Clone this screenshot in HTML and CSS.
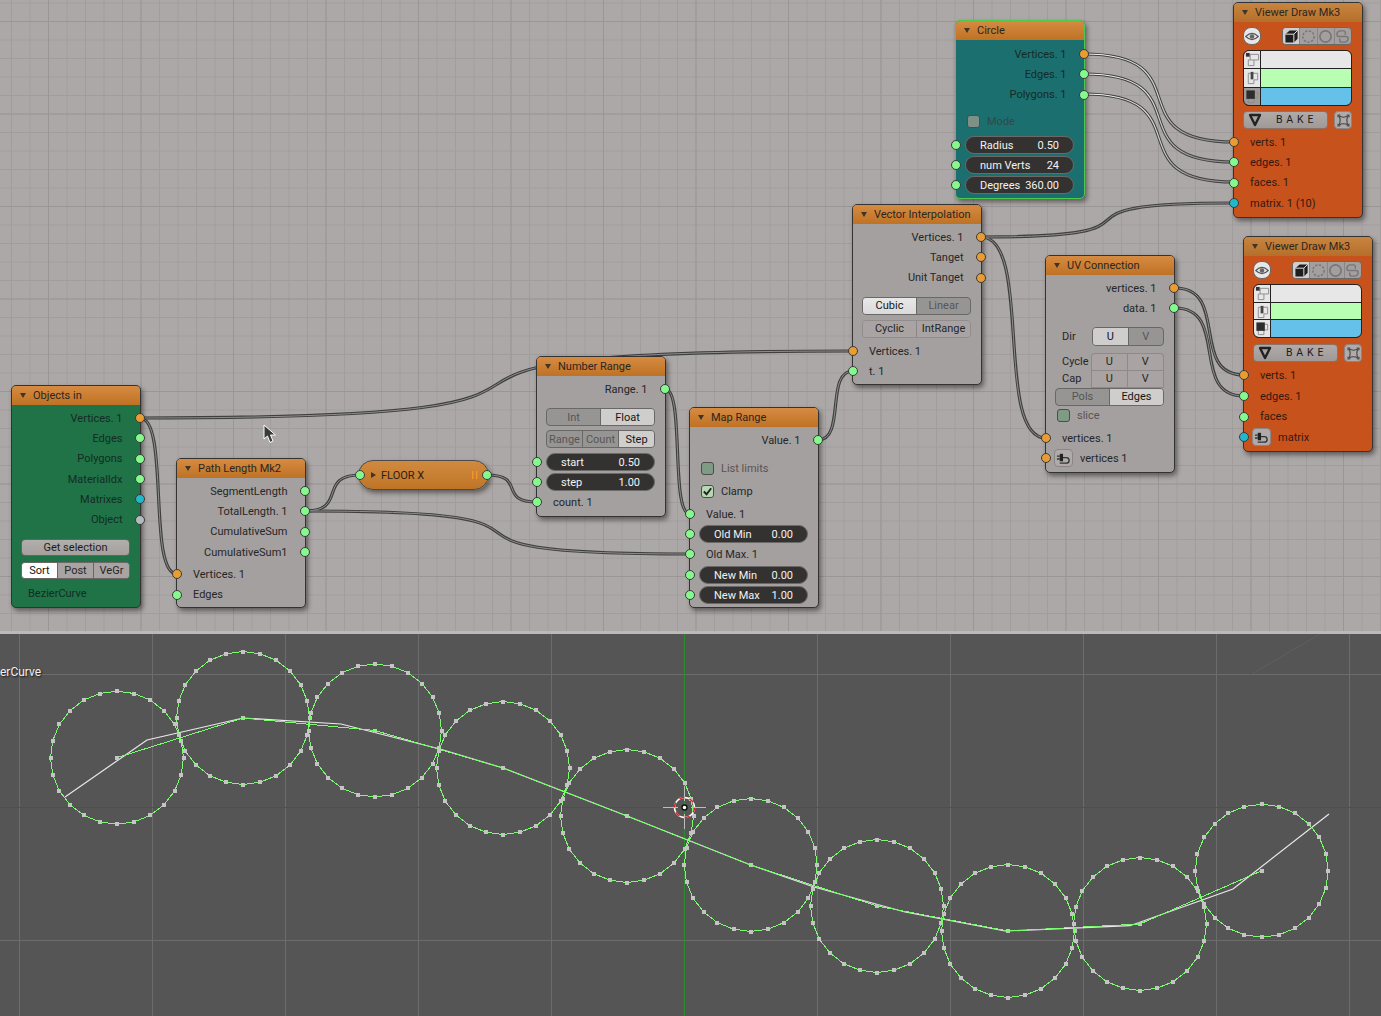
FILE: index.html
```html
<!DOCTYPE html>
<html lang="en">
<head>
<meta charset="utf-8">
<title>Sverchok node editor</title>
<link rel="stylesheet" href="styles.css">
</head>
<body>
<svg class="defs" aria-hidden="true">
  <defs>
    <linearGradient id="sel-grad" gradientUnits="userSpaceOnUse" x1="1084" y1="0" x2="1234" y2="0">
      <stop offset="0" stop-color="#fafafa"/><stop offset=".45" stop-color="#d8d8d8"/><stop offset=".75" stop-color="#8e8e8e"/><stop offset="1" stop-color="#8e8e8e"/>
    </linearGradient>
    <symbol id="i-eye" viewBox="0 0 18 14"><path d="M1 7Q9-1 17 7Q9 15 1 7Z" fill="none" stroke="#555" stroke-width="1.4"/><circle cx="9" cy="7" r="3" fill="#666"/></symbol>
    <symbol id="i-cube" viewBox="0 0 16 16"><path d="M1.500 5.500 6 1.500H14.500V10.500L10.500 14.500H1.500Z" fill="#1e1e1e"/><path d="M1.500 5.500H10.500V14.500M10.500 5.500 14.500 1.500" fill="none" stroke="#eee" stroke-width="1"/></symbol>
    <symbol id="i-dots" viewBox="0 0 16 16"><circle cx="8" cy="8" r="6" fill="none" stroke="#777" stroke-width="1.6" stroke-dasharray="2.4 1.6"/></symbol>
    <symbol id="i-ring" viewBox="0 0 16 16"><circle cx="8" cy="8" r="6" fill="none" stroke="#777" stroke-width="1.8"/></symbol>
    <symbol id="i-py" viewBox="0 0 16 16"><path d="M8 8H4Q2 8 2 5.500T5 2H9Q11 2 11 4V6M8 8H12Q14 8 14 10.500T11 14H7Q5 14 5 12V10" fill="none" stroke="#777" stroke-width="1.5"/></symbol>
    <symbol id="i-t1" viewBox="0 0 16 16"><path d="M5.500 2.500H14.500V8.500H9.500V14.500H3.500V8.500H5.500ZM5.500 8.500H9.500" fill="none" stroke="#8b8b8b"/><rect x="1" y="1" width="4" height="4" fill="#333"/></symbol>
    <symbol id="i-t2" viewBox="0 0 16 16"><path d="M3.500 3.500H13.500V10.500H9.500V14.500H3.500Z" fill="none" stroke="#8b8b8b"/><rect x="6" y="2" width="3" height="8" fill="#444"/></symbol>
    <symbol id="i-t3" viewBox="0 0 16 16"><path d="M3.500 9.500V14.500H9.500V9.500M10.500 3.500H13.500V9.500H10.500" fill="none" stroke="#8b8b8b"/><rect x="1.500" y="1.500" width="9" height="9" fill="#2d2d2d"/></symbol>
    <symbol id="i-tri" viewBox="0 0 14 14"><path d="M2 2H12L7 12Z" fill="none" stroke="#222" stroke-width="2.400" stroke-linejoin="round"/></symbol>
    <symbol id="i-conn" viewBox="0 0 16 16"><path d="M3 3Q8 6 13 3Q10 8 13 13Q8 10 3 13Q6 8 3 3Z" fill="none" stroke="#444" stroke-width="1.200"/><path d="M1.500 1.500h3v3h-3zM11.500 1.500h3v3h-3zM1.500 11.500h3v3h-3zM11.500 11.500h3v3h-3z" fill="#555"/></symbol>
    <symbol id="i-plug" viewBox="0 0 16 16"><path d="M1 5.500H4M1 8.500H4M7 7H11Q14 7 14 10T11 13H4" fill="none" stroke="#333" stroke-width="1.400"/><rect x="4" y="3" width="3.500" height="8" fill="#222"/></symbol>
  </defs>
</svg>

<main class="screen">
  <section class="editor">
    <svg class="wires" viewBox="0 0 1381 631" aria-hidden="true">
      <defs>
        <g id="links">
          <path d="M140 418C169.600 418 147.400 574 177 574"/>
          <path d="M140 418C746 418 247 351 853 351"/>
          <path d="M305 511C348 511 317 475 360 475"/>
          <path d="M305 511C632 511 363 554 690 554"/>
          <path d="M487 475C527 475 497 502 537 502"/>
          <path d="M665 389C685 389 670 514 690 514"/>
          <path d="M818 440C846 440 825 371 853 371"/>
          <path d="M981 237C1033 237 994 438 1046 438"/>
          <path d="M981 237C1195 237 1020 203 1234 203"/>
          <path d="M1175 288C1230 288 1189 375 1244 375"/>
          <path d="M1175 308C1230 308 1189 396 1244 396"/>
        </g>
        <g id="links-sel">
          <path d="M1084 54C1204 54 1114 142 1234 142"/>
          <path d="M1084 74C1204 74 1114 162 1234 162"/>
          <path d="M1084 94C1204 94 1114 182 1234 182"/>
        </g>
      </defs>
      <use href="#links" class="wire-out"/>
      <use href="#links" class="wire-in"/>
      <use href="#links-sel" class="wire-out"/>
      <use href="#links-sel" class="wire-sel"/>
    </svg>

    <article class="node n-objects green">
      <header class="hd"><i class="tri"></i>Objects in</header>
      <div class="row out mt3">Vertices. 1<i class="sock r orange"></i></div>
      <div class="row out">Edges<i class="sock r lime"></i></div>
      <div class="row out">Polygons<i class="sock r lime"></i></div>
      <div class="row out">MaterialIdx<i class="sock r lime"></i></div>
      <div class="row out">Matrixes<i class="sock r cyan"></i></div>
      <div class="row out">Object<i class="sock r grey"></i></div>
      <div class="ctl btn h17 mt9">Get selection</div>
      <div class="ctl seg h17 mt6"><span class="on white">Sort</span><span class="act">Post</span><span class="act">VeGr</span></div>
      <div class="row mt5">BezierCurve</div>
    </article>

    <article class="node n-path">
      <header class="hd"><i class="tri"></i>Path Length Mk2</header>
      <div class="row out mt3">SegmentLength<i class="sock r lime"></i></div>
      <div class="row out">TotalLength. 1<i class="sock r lime"></i></div>
      <div class="row out">CumulativeSum<i class="sock r lime"></i></div>
      <div class="row out">CumulativeSum1<i class="sock r lime"></i></div>
      <div class="row mt2"><i class="sock l orange"></i>Vertices. 1</div>
      <div class="row"><i class="sock l lime"></i>Edges</div>
    </article>

    <article class="floor">
      <i class="sock l lime"></i><i class="tri side"></i>FLOOR X<b class="pause">II</b><i class="sock r lime"></i>
    </article>

    <article class="node n-range">
      <header class="hd"><i class="tri"></i>Number Range</header>
      <div class="row out mt3">Range. 1<i class="sock r lime"></i></div>
      <div class="ctl seg mt9"><span>Int</span><span class="on">Float</span></div>
      <div class="ctl seg mt4"><span>Range</span><span>Count</span><span class="on">Step</span></div>
      <div class="ctl pill mt5"><i class="sock l lime"></i><span>start</span><span>0.50</span></div>
      <div class="ctl pill mt2"><i class="sock l lime"></i><span>step</span><span>1.00</span></div>
      <div class="row mt1"><i class="sock l lime"></i>count. 1</div>
    </article>

    <article class="node n-map">
      <header class="hd"><i class="tri"></i>Map Range</header>
      <div class="row out mt3">Value. 1<i class="sock r lime"></i></div>
      <div class="row check mt8"><i class="box"></i><span class="dim">List limits</span></div>
      <div class="row check mt3"><i class="box on"><svg viewBox="0 0 12 12"><path d="M2 6 5 9 10 2.500" fill="none" stroke="#222" stroke-width="2"/></svg></i>Clamp</div>
      <div class="row mt2"><i class="sock l lime"></i>Value. 1</div>
      <div class="ctl pill mt1"><i class="sock l lime"></i><span>Old Min</span><span>0.00</span></div>
      <div class="row mt1"><i class="sock l lime"></i>Old Max. 1</div>
      <div class="ctl pill mt2"><i class="sock l lime"></i><span>New Min</span><span>0.00</span></div>
      <div class="ctl pill mt2"><i class="sock l lime"></i><span>New Max</span><span>1.00</span></div>
    </article>

    <article class="node n-vector">
      <header class="hd"><i class="tri"></i>Vector Interpolation</header>
      <div class="row out mt3">Vertices. 1<i class="sock r orange"></i></div>
      <div class="row out">Tanget<i class="sock r orange"></i></div>
      <div class="row out">Unit Tanget<i class="sock r orange"></i></div>
      <div class="ctl seg mt9"><span class="on bright">Cubic</span><span>Linear</span></div>
      <div class="ctl seg plain mt5"><span class="act">Cyclic</span><span class="act">IntRange</span></div>
      <div class="row mt3"><i class="sock l orange"></i>Vertices. 1</div>
      <div class="row"><i class="sock l lime"></i>t. 1</div>
    </article>

    <article class="node n-uv">
      <header class="hd"><i class="tri"></i>UV Connection</header>
      <div class="row out mt3">vertices. 1<i class="sock r orange"></i></div>
      <div class="row out">data. 1<i class="sock r lime"></i></div>
      <div class="lab-row mt8"><span class="lab">Dir</span><div class="seg grow"><span class="on">U</span><span>V</span></div></div>
      <div class="lab-grid mt7">
        <div class="labs"><span class="lab">Cycle</span><span class="lab">Cap</span></div>
        <div class="tbl"><span>U</span><span>V</span><span>U</span><span>V</span></div>
      </div>
      <div class="ctl seg"><span>Pols</span><span class="on">Edges</span></div>
      <div class="row check"><i class="box"></i><span class="dim">slice</span></div>
      <div class="row mt2"><i class="sock l orange"></i>vertices. 1</div>
      <div class="row plugrow"><i class="sock l orange"></i><i class="plug"><svg><use href="#i-plug"/></svg></i>vertices 1</div>
    </article>

    <article class="node n-circle teal">
      <header class="hd"><i class="tri"></i>Circle</header>
      <div class="row out mt4">Vertices. 1<i class="sock r orange"></i></div>
      <div class="row out">Edges. 1<i class="sock r lime"></i></div>
      <div class="row out">Polygons. 1<i class="sock r lime"></i></div>
      <div class="row check mt6"><i class="box"></i><span class="dim">Mode</span></div>
      <div class="ctl pill mt5"><i class="sock l lime"></i><span>Radius</span><span>0.50</span></div>
      <div class="ctl pill mt2"><i class="sock l lime"></i><span>num Verts</span><span>24</span></div>
      <div class="ctl pill mt2"><i class="sock l lime"></i><span>Degrees</span><span>360.00</span></div>
    </article>

    <article class="node viewer v-one">
      <header class="hd"><i class="tri"></i>Viewer Draw Mk3</header>
      <div class="tools mt5">
        <i class="eye"><svg><use href="#i-eye"/></svg></i>
        <div class="modes"><i class="on"><svg><use href="#i-cube"/></svg></i><i><svg><use href="#i-dots"/></svg></i><i><svg><use href="#i-ring"/></svg></i><i><svg><use href="#i-py"/></svg></i></div>
      </div>
      <div class="swatches mt5">
        <div class="sw"><i><svg><use href="#i-t1"/></svg></i><b class="c-v"></b></div>
        <div class="sw"><i><svg><use href="#i-t2"/></svg></i><b class="c-e"></b></div>
        <div class="sw"><i class="darkcell"><svg><use href="#i-t3"/></svg></i><b class="c-f"></b></div>
      </div>
      <div class="bakebar mt5">
        <div class="bake"><svg><use href="#i-tri"/></svg><span>BAKE</span></div>
        <i class="plug conn"><svg><use href="#i-conn"/></svg></i>
      </div>
      <div class="row mt3"><i class="sock l orange"></i>verts. 1</div>
      <div class="row"><i class="sock l lime"></i>edges. 1</div>
      <div class="row"><i class="sock l lime"></i>faces. 1</div>
      <div class="row"><i class="sock l cyan"></i>matrix. 1 (10)</div>
    </article>

    <article class="node viewer v-two">
      <header class="hd"><i class="tri"></i>Viewer Draw Mk3</header>
      <div class="tools mt5">
        <i class="eye"><svg><use href="#i-eye"/></svg></i>
        <div class="modes"><i class="on"><svg><use href="#i-cube"/></svg></i><i><svg><use href="#i-dots"/></svg></i><i><svg><use href="#i-ring"/></svg></i><i><svg><use href="#i-py"/></svg></i></div>
      </div>
      <div class="swatches mt5">
        <div class="sw"><i><svg><use href="#i-t1"/></svg></i><b class="c-v"></b></div>
        <div class="sw"><i><svg><use href="#i-t2"/></svg></i><b class="c-e"></b></div>
        <div class="sw"><i><svg><use href="#i-t3"/></svg></i><b class="c-f"></b></div>
      </div>
      <div class="bakebar mt6">
        <div class="bake"><svg><use href="#i-tri"/></svg><span>BAKE</span></div>
        <i class="plug conn"><svg><use href="#i-conn"/></svg></i>
      </div>
      <div class="row mt3"><i class="sock l orange"></i>verts. 1</div>
      <div class="row mt1"><i class="sock l lime"></i>edges. 1</div>
      <div class="row"><i class="sock l lime"></i>faces</div>
      <div class="row plugrow"><i class="sock l cyan"></i><i class="plug"><svg><use href="#i-plug"/></svg></i>matrix</div>
    </article>

    <svg class="pointer" viewBox="0 0 14 20" aria-hidden="true"><path d="M1 1V15L4.500 12 7 18.500 10 17 7.500 11H12.500Z" fill="#3a3a3a" stroke="#fff" stroke-width="1"/></svg>
  </section>

  <section class="viewport">
    <svg class="scene" viewBox="0 634 1381 382" aria-hidden="true">
      <defs>
        <g id="ring">
          <polygon class="edge" points="66.5,0 64.2,17.2 57.6,33.3 47,47 33.3,57.6 17.2,64.2 0,66.5 -17.2,64.2 -33.3,57.6 -47,47 -57.6,33.3 -64.2,17.2 -66.5,0 -64.2,-17.2 -57.6,-33.3 -47,-47 -33.3,-57.6 -17.2,-64.2 0,-66.5 17.2,-64.2 33.3,-57.6 47,-47 57.6,-33.3 64.2,-17.2"/>
          <path class="vert" d="M64.5-2h4v4h-4zM62.2 15.200h4v4h-4zM55.600 31.300h4v4h-4zM45 45h4v4h-4zM31.300 55.600h4v4h-4zM15.200 62.200h4v4h-4zM-2 64.500h4v4h-4zM-19.200 62.200h4v4h-4zM-35.300 55.600h4v4h-4zM-49 45h4v4h-4zM-59.600 31.300h4v4h-4zM-66.200 15.200h4v4h-4zM-68.500-2h4v4h-4zM-66.200-19.200h4v4h-4zM-59.600-35.300h4v4h-4zM-49-49h4v4h-4zM-35.300-59.600h4v4h-4zM-19.200-66.200h4v4h-4zM-2-68.500h4v4h-4zM15.200-66.200h4v4h-4zM31.300-59.600h4v4h-4zM45-49h4v4h-4zM55.600-35.300h4v4h-4zM62.200-19.200h4v4h-4zM-2-2h4v4h-4z"/>
        </g>
      </defs>
      <path class="grid" d="M19.500 634V1016M152.500 634V1016M285.500 634V1016M418.500 634V1016M551.500 634V1016M817.500 634V1016M950.500 634V1016M1083.500 634V1016M1216.500 634V1016M1349.500 634V1016M0 674.500H1381M0 940.500H1381"/>
      <path class="faint" d="M1250 675 1320 634"/>
      <path class="axis-x" d="M0 807.500H1381"/>
      <path class="axis-y" d="M684.500 634V1016"/>
      <polyline class="spline" points="65,797 147,740 243,718 341,724 440,749 503,768 627,816 750.700,865 814,887 905,912 1005,931 1130,925.700 1233,889 1329,814"/>
      <use href="#ring" x="117" y="757.700"/>
      <use href="#ring" x="243" y="718"/>
      <use href="#ring" x="375" y="730.500"/>
      <use href="#ring" x="503" y="768"/>
      <use href="#ring" x="627" y="816"/>
      <use href="#ring" x="750.700" y="865"/>
      <use href="#ring" x="877" y="906"/>
      <use href="#ring" x="1008" y="931"/>
      <use href="#ring" x="1140" y="924"/>
      <use href="#ring" x="1261.700" y="870.700"/>
      <polyline class="path" points="117,757.700 243,718 375,730.500 503,768 627,816 750.700,865 877,906 1008,931 1140,924 1261.700,870.700"/>
      <path class="cross" d="M663 807.500H678M691 807.500H706M684.500 786V801M684.500 814V829"/>
      <circle class="cur-w" cx="684.500" cy="807.500" r="10"/>
      <circle class="cur-r" cx="684.500" cy="807.500" r="10"/>
      <circle class="cur-c" cx="684.500" cy="807.500" r="2.500"/>
    </svg>
    <span class="obj-name">erCurve</span>
  </section>
</main>
</body>
</html>
```

FILE: styles.css
```css
* { box-sizing: border-box; }
html, body { margin: 0; height: 100%; }
body {
  overflow: hidden;
  font: 11px/1 Roboto, "Noto Sans", sans-serif;
  color: #262626;
  background: #555;
}
i, b { font-style: normal; font-weight: normal; display: block; }
svg { display: block; }
.defs { position: absolute; width: 0; height: 0; }

.screen { width: 1381px; height: 1016px; display: flex; flex-direction: column; }

/* node editor */
.editor {
  position: relative;
  height: 631px;
  flex: none;
  overflow: hidden;
  background-color: #aca8a7;
  background-image:
    linear-gradient(to right, #9a9695 1px, transparent 1px),
    linear-gradient(to bottom, #9a9695 1px, transparent 1px),
    linear-gradient(to right, #a19d9c 1px, transparent 1px),
    linear-gradient(to bottom, #a19d9c 1px, transparent 1px);
  background-size: 92.5px 92.5px, 92.5px 92.5px, 18.5px 18.5px, 18.5px 18.5px;
  background-position: 48px 0, 0 21px, 11px 0, 0 2.500px;
}
.wires { position: absolute; left: 0; top: 0; width: 1381px; height: 631px; fill: none; }
.wire-out { stroke: #3f3f3f; stroke-width: 3.200; fill: none; }
.wire-in { stroke: #8e8e8e; stroke-width: 1; fill: none; }
.wire-sel { stroke: url(#sel-grad); stroke-width: 1.200; fill: none; }

.pointer { position: absolute; left: 263px; top: 424px; width: 14px; height: 20px; }

.node {
  position: absolute;
  width: 130px;
  border: 1px solid #333;
  border-radius: 5px;
  background: #a3a09f;
  box-shadow: 2px 3px 5px rgba(0, 0, 0, .45);
}
.hd {
  height: 19px;
  display: flex;
  align-items: center;
  padding-left: 8px;
  border-radius: 4px 4px 0 0;
  background: linear-gradient(#d68b42, #bf7224);
  color: #2b2620;
}
.tri {
  width: 0; height: 0;
  margin-right: 7px;
  border-style: solid;
  border-width: 5px 3px 0;
  border-color: #3f3426 transparent transparent;
}
.tri.side { border-width: 3px 0 3px 5px; border-color: transparent transparent transparent #3f3426; margin-right: 5px; }

.n-objects { left: 11px; top: 385px; height: 223px; }
.n-path { left: 176px; top: 458px; height: 150px; }
.n-range { left: 536px; top: 356px; height: 161px; }
.n-map { left: 689px; top: 407px; height: 201px; }
.n-vector { left: 852px; top: 204px; height: 181px; }
.n-uv { left: 1045px; top: 255px; height: 218px; }
.n-circle { left: 955px; top: 20px; height: 179px; }
.v-one { left: 1233px; top: 2px; height: 216px; }
.v-two { left: 1243px; top: 236px; height: 216px; }

.green { background: #1f7347; }
.teal { background: #1c6f6f; border-color: #4cc94c; }
.viewer { background: #c8521c; }
.viewer .hd { background: linear-gradient(#c8853f, #b56f2b); }

.row {
  position: relative;
  display: flex;
  align-items: center;
  height: 20.300px;
  padding: 0 17.500px 0 16px;
  white-space: nowrap;
}
.row.out { justify-content: flex-end; }
.green .row, .teal .row { color: #152b24; }
.viewer .row { padding-left: 16px; color: #33190f; }

.sock {
  position: absolute;
  top: 50%;
  width: 10px; height: 10px;
  margin-top: -5px;
  border: 1px solid #3a3a3a;
  border-radius: 50%;
  z-index: 2;
}
.sock.l { left: -5px; }
.sock.r { right: -5px; }
.orange { background: #e89c32; }
.lime { background: #85f98e; }
.cyan { background: #22b7c9; }
.grey { background: #b3bcbc; }

.mt1 { margin-top: 1px; }
.mt2 { margin-top: 2px; }
.mt3 { margin-top: 3px; }
.mt4 { margin-top: 4px; }
.mt5 { margin-top: 5px; }
.mt6 { margin-top: 6px; }
.mt7 { margin-top: 7px; }
.mt8 { margin-top: 8px; }
.mt9 { margin-top: 9px; }

.ctl { margin-left: 9px; margin-right: 10px; }

.btn {
  display: flex;
  align-items: center;
  justify-content: center;
  border: 1px solid #66625f;
  border-radius: 4px;
  background: linear-gradient(#b2aeac, #a5a09e);
  color: #1c1c1c;
}
.h17 { height: 17px; }

.seg {
  display: flex;
  height: 18px;
  border: 1px solid #6a6867;
  border-radius: 4px;
  overflow: hidden;
  background: #979594;
}
.seg span {
  flex: 1 1 0;
  display: flex;
  align-items: center;
  justify-content: center;
  color: #565655;
  white-space: nowrap;
}
.seg span + span { border-left: 1px solid #6a6867; }
.seg .on { background: #cfcecd; color: #161616; }
.seg .bright { background: linear-gradient(#e8e8e8, #dadada); }
.seg .white { background: #fff; }
.seg .act { background: #a9a4a3; color: #262626; }
.seg.plain { border-color: #918d8c; }
.seg.plain span + span { border-color: #8b8786; }
.seg.h17 { height: 17px; }

.pill {
  position: relative;
  display: flex;
  align-items: center;
  justify-content: space-between;
  height: 18px;
  padding: 0 14px;
  border: 1px solid #6b6968;
  border-radius: 9px;
  background: #343231;
  color: #f2f2f2;
}
.pill .sock { left: -15px; }

.check { gap: 7px; padding-left: 11px; }
.box {
  width: 13px; height: 13px;
  border: 1px solid #4c4c4c;
  border-radius: 3px;
  background: #7f9a85;
}
.box.on { background: #b7d9b2; }
.box svg { width: 11px; height: 11px; }
.teal .box { background: #7d9187; }
.dim { color: #5d5351; }
.teal .dim { color: #324a49; }

.lab-row, .lab-grid { display: flex; margin-left: 9px; margin-right: 10px; }
.lab-row { align-items: center; height: 19px; }
.lab { color: #262626; padding-left: 7px; }
.lab-row .lab { width: 37px; }
.grow { flex: 1; height: 19px; }
.labs { width: 36px; display: flex; flex-direction: column; justify-content: space-around; }
.tbl {
  flex: 1;
  display: grid;
  grid-template-columns: 1fr 1fr;
  height: 35px;
  border: 1px solid #8e8a89;
  border-bottom: 0;
  border-radius: 4px 4px 0 0;
  background: #a9a4a3;
}
.tbl span {
  display: flex;
  align-items: center;
  justify-content: center;
  border-bottom: 1px solid #8e8a89;
}
.tbl span:nth-child(odd) { border-right: 1px solid #8e8a89; }

.plug {
  width: 19px; height: 18px;
  margin-right: 7px;
  display: flex;
  align-items: center;
  justify-content: center;
  border: 1px solid #8b8685;
  border-radius: 4px;
  background: #b0abaa;
  flex: none;
}
.plug svg { width: 15px; height: 15px; }
.row.plugrow, .viewer .row.plugrow { padding-left: 8px; }

/* floor node */
.floor {
  position: absolute;
  left: 358px; top: 460px;
  width: 131px; height: 30px;
  display: flex;
  align-items: center;
  padding-left: 12px;
  border: 1px solid #4a4a4a;
  border-radius: 15px;
  background: linear-gradient(#d08a3f, #bf7527);
  box-shadow: 2px 3px 5px rgba(0, 0, 0, .45);
  color: #2a2118;
}
.floor .pause {
  position: absolute;
  right: 9px;
  color: #ff9b2a;
  letter-spacing: 1px;
}
.floor .sock.l { left: -4px; }
.floor .sock.r { right: -4px; }

/* viewer */
.tools {
  display: flex;
  align-items: center;
  justify-content: space-between;
  margin-left: 9px;
  margin-right: 10px;
  height: 18px;
}
.eye {
  width: 18px; height: 18px;
  display: flex;
  align-items: center;
  justify-content: center;
  border: 1px solid #6a6867;
  border-radius: 8px;
  background: #e7e7e7;
}
.eye svg { width: 14px; height: 11px; }
.modes {
  display: flex;
  width: 70px; height: 18px;
  border: 1px solid #6a6867;
  border-radius: 4px;
  overflow: hidden;
  background: #a39f9e;
}
.modes i {
  flex: 1 1 0;
  display: flex;
  align-items: center;
  justify-content: center;
}
.modes i + i { border-left: 1px solid #8a8685; }
.modes i.on { background: #d0cfce; }
.modes svg { width: 15px; height: 15px; }

.swatches {
  display: flex;
  flex-direction: column;
  height: 56px;
  margin-left: 9px;
  margin-right: 10px;
  border: 1px solid #222;
  border-radius: 6px;
  overflow: hidden;
  background: #222;
  gap: 1px;
}
.v-two .swatches { height: 54px; }
.sw { flex: 1; display: flex; }
.sw i {
  width: 17px;
  display: flex;
  align-items: center;
  justify-content: center;
  background: #e7e7e7;
  border-right: 1px solid #222;
}
.sw i.darkcell { background: #9d9a99; }
.sw svg { width: 15px; height: 15px; }
.sw b { flex: 1; }
.c-v { background: #e7e7e7; }
.c-e { background: #b8ffb3; }
.c-f { background: #66c1ea; }

.bakebar {
  display: flex;
  justify-content: space-between;
  margin-left: 9px;
  margin-right: 10px;
  height: 18px;
}
.bake {
  width: 85px;
  display: flex;
  align-items: center;
  padding-left: 4px;
  border: 1px solid #8b7368;
  border-radius: 4px;
  background: linear-gradient(#b0aba9, #9f9a98);
}
.bake svg { width: 14px; height: 14px; flex: none; }
.bake span {
  margin-left: 14px;
  color: #1c1c1c;
  letter-spacing: 3.800px;
  font-size: 10.500px;
}
.conn { margin-right: 0; width: 18px; }

/* 3d view */
.viewport {
  position: relative;
  flex: 1;
  overflow: hidden;
  border-top: 3px solid #bdb9b8;
  background: #555;
}
.scene { position: absolute; left: 0; top: 0; width: 1381px; height: 382px; fill: none; }
.grid { stroke: #6c6c6c; stroke-width: 1; shape-rendering: crispEdges; }
.faint { stroke: #5f5f5f; stroke-width: 1; }
.axis-x { stroke: #8f3333; stroke-width: 1; shape-rendering: crispEdges; }
.axis-y { stroke: #2a8c2a; stroke-width: 1; shape-rendering: crispEdges; }
.spline { stroke: #e8e8e8; stroke-width: 1.200; fill: none; }
.edge { stroke: #7dfb70; stroke-width: 1; fill: none; shape-rendering: crispEdges; }
.vert { fill: #c4c4c4; stroke: none; shape-rendering: crispEdges; }
.path { stroke: #7dfb70; stroke-width: 1; fill: none; shape-rendering: crispEdges; }
.cross { stroke: #bdbdbd; stroke-width: 1; shape-rendering: crispEdges; }
.cur-w { stroke: #fff; stroke-width: 1.500; fill: none; }
.cur-r { stroke: #d62020; stroke-width: 1.500; fill: none; stroke-dasharray: 5.200 5.200; }
.cur-c { fill: #fff; stroke: #111; stroke-width: 1.400; }
.obj-name {
  position: absolute;
  left: 0;
  top: 32px;
  font-size: 12px;
  color: #f0f0f0;
  text-shadow: 1px 1px 2px #111;
  white-space: nowrap;
}
```
